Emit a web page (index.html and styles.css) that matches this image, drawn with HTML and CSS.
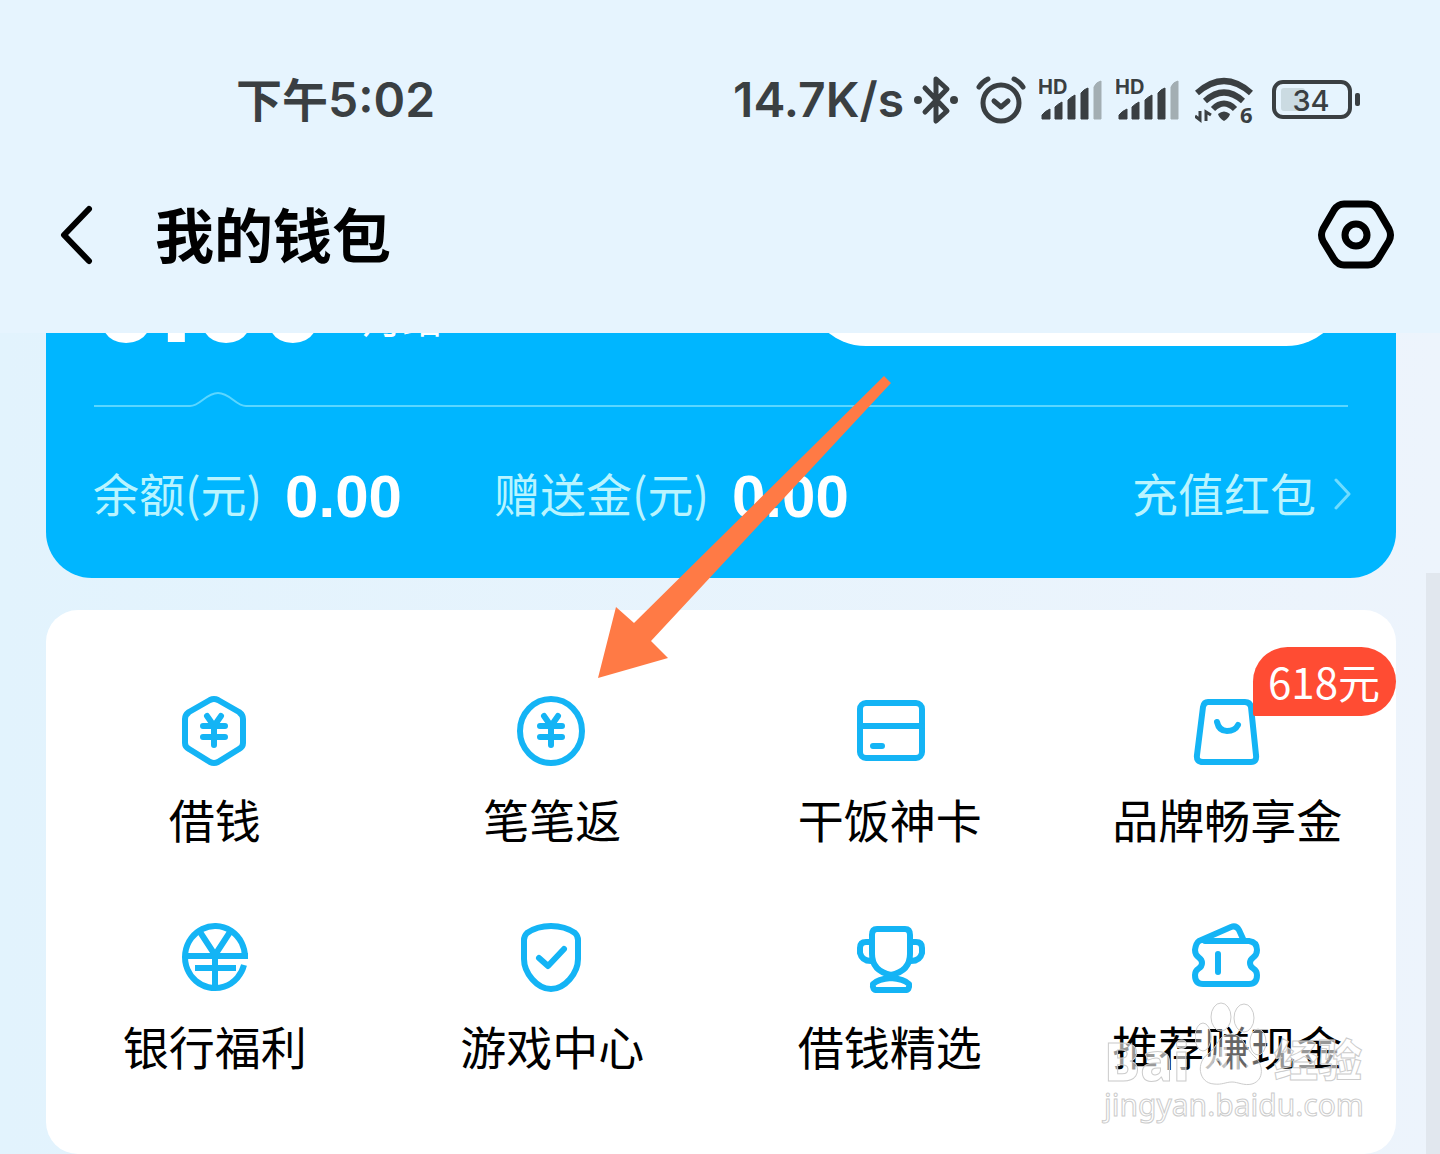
FILE: index.html
```html
<!DOCTYPE html>
<html lang="zh-CN">
<head>
<meta charset="utf-8">
<meta name="viewport" content="width=device-width, initial-scale=1">
<title>我的钱包</title>
<link rel="stylesheet" href="styles.css">
</head>
<body>
<div class="page">
  <header class="header">
    <div class="status">
      <div class="clock"><span class="clock-period">下午</span>5:02</div>
      <div class="indicators">
        <span class="speed">14.7K/s</span>
        <svg class="ind bluetooth" width="46" height="50" viewBox="0 0 46 50" aria-hidden="true">
          <path d="M12 13L34 36L23 46V4L34 14L12 37" fill="none" stroke="#3a3f42" stroke-width="5" stroke-linejoin="round" stroke-linecap="round"/>
          <circle cx="5" cy="25" r="4"/><circle cx="41" cy="25" r="4"/>
        </svg>
        <svg class="ind alarm" width="50" height="50" viewBox="0 0 50 50" aria-hidden="true">
          <g fill="none" stroke="#3a3f42" stroke-width="5" stroke-linecap="round">
            <circle cx="25" cy="28" r="18"/>
            <path d="M18 26L25 32L32 26" stroke-linejoin="round"/>
            <path d="M3 12Q6 7 12 4M38 4Q44 7 47 12"/>
          </g>
        </svg>
        <svg class="ind signal" width="64" height="70" viewBox="0 -10 64 70" aria-hidden="true">
          <text x="-1" y="19" class="hd">HD</text>
          <path d="M3 44V40Q6 36 11 34V44ZM16 44V32Q19 29 23 27V44ZM29 44V25Q32 22 36 20V44ZM42 44V18Q45 14 49 13V44Z" stroke="#3a3f42" stroke-linejoin="round"/>
          <path d="M55 44V12Q57 7 62 6V44Z" fill="#a3aeb3" stroke="#a3aeb3" stroke-linejoin="round"/>
        </svg>
        <svg class="ind signal" width="64" height="70" viewBox="0 -10 64 70" aria-hidden="true">
          <text x="-1" y="19" class="hd">HD</text>
          <path d="M3 44V40Q6 36 11 34V44ZM16 44V32Q19 29 23 27V44ZM29 44V25Q32 22 36 20V44ZM42 44V18Q45 14 49 13V44Z" stroke="#3a3f42" stroke-linejoin="round"/>
          <path d="M55 44V12Q57 7 62 6V44Z" fill="#a3aeb3" stroke="#a3aeb3" stroke-linejoin="round"/>
        </svg>
        <svg class="ind wifi" width="60" height="70" viewBox="0 -10 60 70" aria-hidden="true">
          <g fill="none" stroke="#3a3f42" stroke-width="6">
            <path d="M2 18Q29 -6 56 18"/>
            <path d="M10 26Q29 9 48 26"/>
            <path d="M18 34Q29 23 40 34"/>
          </g>
          <path d="M23 39Q29 34 35 39Q34 43 29 46Q24 43 23 39Z"/>
          <path d="M5 36V45L0 41M11 46V37L16 40" fill="none" stroke="#3a3f42" stroke-width="3"/>
          <text x="45" y="48" class="gen">6</text>
        </svg>
        <svg class="ind battery" width="88" height="50" viewBox="0 0 88 50" aria-hidden="true">
          <rect x="9" y="13" width="24" height="23" rx="3" fill="#cbdbe2"/>
          <rect x="2" y="7" width="76" height="35" rx="9" fill="none" stroke="#3a3f42" stroke-width="4"/>
          <rect x="83" y="18" width="5" height="13" rx="2"/>
          <text x="39" y="36" text-anchor="middle" class="level">34</text>
        </svg>
      </div>
    </div>
    <nav class="nav">
      <button class="icon-button" type="button" aria-label="返回">
        <svg width="34" height="60" viewBox="0 0 34 60"><path d="M29 4L4 30L29 56" fill="none" stroke="#000" stroke-width="6" stroke-linecap="round" stroke-linejoin="round"/></svg>
      </button>
      <h1 class="title">我的钱包</h1>
      <button class="icon-button" type="button" aria-label="设置">
        <svg width="78" height="72" viewBox="0 0 78 72" fill="none" stroke="#000" stroke-width="7"><path d="M27 5H51Q57 5 61 11L72 30Q75 36 72 42L61 60Q57 66 51 66H27Q21 66 17 60L6 42Q3 36 6 30L17 11Q21 5 27 5Z"/><circle cx="39" cy="36" r="11"/></svg>
      </button>
    </nav>
  </header>

  <main class="content">
    <section class="balance">
      <div class="credit">
        <span class="credit-amount">0.00</span>
        <span class="credit-tag">月结</span>
        <button class="credit-action" type="button" aria-label="查看"></button>
      </div>
      <svg class="divider" height="20" aria-hidden="true"><path d="M0 15H96C106 15 112 2 124 2S142 15 152 15H4000" fill="none" stroke="#5bd6ff" stroke-width="2"/></svg>
      <div class="amounts">
        <span class="amount-label">余额(元)</span>
        <span class="amount-value">0.00</span>
        <span class="amount-label">赠送金(元)</span>
        <span class="amount-value">0.00</span>
        <a class="recharge" href="#"><span class="amount-label">充值红包</span>
          <svg width="18" height="34" viewBox="0 0 18 34" aria-hidden="true"><path d="M2 2L15 16L2 30" fill="none" stroke="#6fdcff" stroke-width="3" stroke-linecap="round" stroke-linejoin="round"/></svg>
        </a>
      </div>
    </section>

    <section class="services">
      <a class="service" href="#">
        <svg class="service-icon" viewBox="0 0 80 80" aria-hidden="true"><path d="M35 9Q39 7 43 9L64 21Q68 24 68 28V52Q68 56 64 58L43 71Q39 73 35 71L14 58Q10 56 10 52V28Q10 24 14 21Z"/><path d="M32 25L39 35L46 25M28 35H50M28 46H50M39 35V54"/></svg>
        <span>借钱</span>
      </a>
      <a class="service" href="#">
        <svg class="service-icon" viewBox="0 0 80 80" aria-hidden="true"><ellipse cx="39" cy="40" rx="31" ry="32"/><path d="M32 25L39 35L46 25M28 35H50M28 46H50M39 35V54"/></svg>
        <span>笔笔返</span>
      </a>
      <a class="service" href="#">
        <svg class="service-icon" viewBox="0 0 80 80" aria-hidden="true"><rect x="10" y="12" width="62" height="55" rx="6"/><path d="M10 35H72M23 55H32"/></svg>
        <span>干饭神卡</span>
      </a>
      <a class="service" href="#">
        <svg class="service-icon" viewBox="0 0 80 80" aria-hidden="true"><path d="M21 11H58Q63 11 64 16L69 64Q70 71 64 71H16Q9 71 10 64L16 16Q17 11 21 11Z"/><path d="M30 31Q32 40 40 40Q48 40 51 34"/></svg>
        <span>品牌畅享金</span>
      </a>
      <a class="service" href="#">
        <svg class="service-icon" viewBox="0 0 80 80" aria-hidden="true"><g stroke-linecap="butt"><path d="M70 39A30 31 0 1 0 69 47"/><path d="M25 14L40 37L55 14M10 38H73M20 50H61M40 36V71"/></g></svg>
        <span>银行福利</span>
      </a>
      <a class="service" href="#">
        <svg class="service-icon" viewBox="0 0 80 80" aria-hidden="true"><path d="M39 8Q53 8 63 15Q66 18 66 22V41C66 55 53 71 39 71S12 55 12 41V22Q12 18 15 15Q25 8 39 8Z"/><path d="M27 40L36 48L52 31"/></svg>
        <span>游戏中心</span>
      </a>
      <a class="service" href="#">
        <svg class="service-icon" viewBox="0 0 80 80" aria-hidden="true"><path d="M27 11H55Q60 11 60 17V36Q60 53 41 57Q22 53 22 36V17Q22 11 27 11ZM21 24H16Q10 24 10 30V35Q12 43 21 43M61 24H66Q72 24 72 30V35Q70 43 61 43M41 60Q54 61 59 66Q60 72 55 72H27Q22 72 23 66Q28 61 41 60Z"/></svg>
        <span>借钱精选</span>
      </a>
      <a class="service" href="#">
        <svg class="service-icon" viewBox="0 0 80 80" aria-hidden="true"><path d="M18 23H62Q70 24 70 32C70 41 63 38 63 45S70 49 70 57Q70 66 62 66H16Q8 66 8 57C8 49 15 52 15 45S8 41 8 32Q9 25 12 23L44 9Q49 7 52 12L57 23M31 36V54"/></svg>
        <span>推荐赚现金</span>
      </a>
      <span class="badge">618元</span>
      <div class="watermark">
        <div class="watermark-brand">
          <span class="watermark-bai">Bai</span>
          <svg class="watermark-paw" width="74" height="86" viewBox="1 0 74 86" aria-hidden="true">
            <g fill="#fff" fill-opacity=".4" stroke="#ccc" stroke-width="1">
              <ellipse cx="27" cy="16" rx="10" ry="14"/><ellipse cx="50" cy="17" rx="10" ry="14"/><ellipse cx="9" cy="36" rx="8" ry="14"/><ellipse cx="64" cy="41" rx="8" ry="13"/>
              <path d="M37 33C24 33 24 46 14 53C2 61 4 82 20 83C28 84 32 81 38 81S50 85 58 83C71 79 69 63 61 56C51 48 50 33 37 33Z"/>
            </g>
            <text x="36" y="76" text-anchor="middle">du</text>
          </svg>
          <span class="watermark-name">经验</span>
        </div>
        <div class="watermark-site">jingyan.baidu.com</div>
      </div>
    </section>
    <svg class="pointer" width="294" height="302" viewBox="0 0 294 302" aria-hidden="true"><path d="M0 302L18 231L36 247L286 0L293 7L53 265L70 282Z" fill="#ff7a45"/></svg>
  </main>
  <div class="scrollbar"></div>
</div>
</body>
</html>
```

FILE: styles.css
```css
* { box-sizing: border-box; }

body {
  margin: 0;
  font-family: "Noto Sans CJK SC", sans-serif;
  color: #000;
}

.page {
  position: relative;
  min-height: 100vh;
  background: linear-gradient(90deg, #e2f3fd, #edf4fc);
}

button {
  padding: 0;
  border: 0;
  background: none;
  font: inherit;
}

a { color: inherit; text-decoration: none; }
svg { display: block; flex: none; }

.header {
  padding: 65px 45px 48px 60px;
  background: #e6f4fe;
}

.status {
  display: flex;
  align-items: center;
  justify-content: space-between;
  height: 70px;
  padding: 0 35px 0 176px;
  color: #3a3f42;
  font: 600 48px/70px Inter, "Noto Sans CJK SC", sans-serif;
}

.clock-period { font-size: 46px; }

.indicators { display: flex; align-items: center; }
.ind { fill: #3a3f42; }
.bluetooth { margin-left: 9px; }
.alarm { margin-left: 17px; }
.signal { margin-left: 13px; }
.wifi { margin-left: 15px; }
.battery { margin-left: 17px; }
.hd { font: 700 20px Inter, sans-serif; }
.gen { font: 700 22px "Noto Sans", sans-serif; }
.level { font: 500 29px Inter, sans-serif; }

.nav {
  display: flex;
  align-items: center;
  height: 100px;
  margin-top: 50px;
}

.title {
  flex: 1;
  margin: 0 0 0 61px;
  padding-bottom: 4px;
  font-size: 59px;
  line-height: 80px;
  font-weight: 700;
}

.content {
  position: relative;
  padding: 0 44px 0 46px;
}

.balance {
  overflow: hidden;
  border-radius: 0 0 46px 46px;
  background: #00b6ff;
  color: #fff;
}

.credit {
  display: flex;
  align-items: flex-end;
  height: 13px;
  padding: 0 50px 0 47px;
  overflow: hidden;
}

.credit-amount { font: 700 120px/92px "Liberation Sans", sans-serif; }
.credit-tag { margin-left: 36px; font-size: 40px; line-height: 60px; }
.credit-action {
  width: 540px;
  height: 120px;
  margin-left: auto;
  border-radius: 60px;
  background: #fff;
}

.divider {
  width: calc(100% - 96px);
  margin: 45px 48px 0;
}

.amounts {
  display: flex;
  align-items: center;
  height: 167px;
  padding: 0 44px 0 47px;
  color: #b9f4ff;
  font-size: 46px;
  line-height: 60px;
}

.amount-label { padding-bottom: 6px; }

.amount-value {
  margin: 0 92px 0 23px;
  padding-top: 4px;
  color: #fff;
  font: 700 60px/60px "Liberation Sans", sans-serif;
}

.recharge {
  display: flex;
  align-items: center;
  gap: 18px;
  margin-left: auto;
}

.services {
  position: relative;
  display: grid;
  grid-template-columns: repeat(4, 1fr);
  row-gap: 70px;
  margin-top: 32px;
  padding: 81px 0 79px;
  border-radius: 32px;
  background: #fff;
}

.service {
  display: flex;
  flex-direction: column;
  align-items: center;
  gap: 17px;
  font-size: 46px;
  line-height: 60px;
}

.service-icon {
  width: 80px;
  height: 80px;
  fill: none;
  stroke: #14b4f5;
  stroke-width: 6;
  stroke-linecap: round;
  stroke-linejoin: round;
}

.badge {
  position: absolute;
  top: 37px;
  right: 0;
  padding: 0 16px 1px 15px;
  border-radius: 35px 35px 35px 2px;
  background: #ff4c33;
  color: #fff;
  font-size: 42px;
  line-height: 68px;
}

.watermark {
  position: absolute;
  right: 34px;
  bottom: 31px;
  width: 258px;
  color: rgba(255, 255, 255, .6);
  -webkit-text-stroke: 1px #ccc;
  font-family: "Noto Sans", "Noto Sans CJK SC", sans-serif;
}

.watermark-brand {
  display: flex;
  align-items: flex-end;
  justify-content: space-between;
}

.watermark-bai { font-size: 54px; font-weight: 800; line-height: 54px; }
.watermark-paw text { fill: #fff; fill-opacity: .6; font-size: 40px; font-weight: 800; }
.watermark-name { font-size: 44px; font-weight: 900; line-height: 54px; }
.watermark-site { font-size: 30px; line-height: 36px; }

.pointer {
  position: absolute;
  top: 43px;
  left: 598px;
}

.scrollbar {
  position: absolute;
  top: 573px;
  right: 0;
  bottom: 0;
  width: 14px;
  background: #e1e7ee;
}
```
